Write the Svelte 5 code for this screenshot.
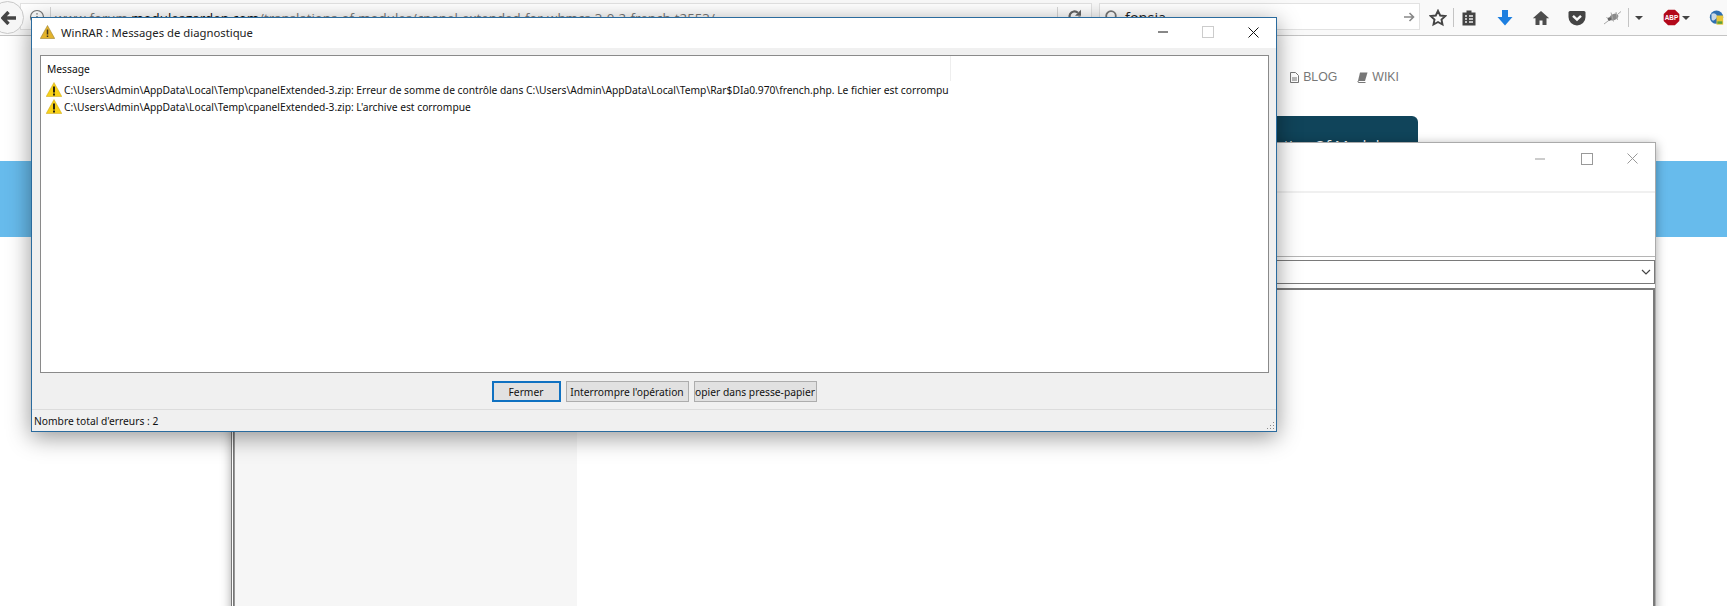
<script>
  const rows = [
    "C:\\Users\\Admin\\AppData\\Local\\Temp\\cpanelExtended-3.zip: Erreur de somme de contrôle dans C:\\Users\\Admin\\AppData\\Local\\Temp\\Rar$DIa0.970\\french.php. Le fichier est corrompu",
    "C:\\Users\\Admin\\AppData\\Local\\Temp\\cpanelExtended-3.zip: L'archive est corrompue"
  ];
</script>

<div class="page">
  <header class="toolbar">
    <div class="back">
      <svg width="15" height="14" viewBox="0 0 15 14"><path d="M7.500 1 1.800 7l5.700 6M2.500 7H15" fill="none" stroke="#444" stroke-width="3.400"/></svg>
    </div>
    <div class="urlbar">
      <svg class="info" width="16" height="16" viewBox="0 0 16 16"><circle cx="8" cy="8" r="6.500" fill="none" stroke="#777" stroke-width="1.200"/><path d="M8 7v4.500M8 4.200v1.400" stroke="#777" stroke-width="1.500"/></svg>
      <i class="urlsep"></i>
      <span class="url">www.forum.<b>modulesgarden.com</b>/translations-of-modules/cpanel-extended-for-whmcs-3-0-2-french-t2553/</span>
      <i class="urlsep end"></i>
      <svg class="reload" width="15" height="15" viewBox="0 0 15 15"><path d="M12.500 7.500a5 5 0 1 1-1.600-3.700" fill="none" stroke="#666" stroke-width="2.200"/><path d="M14 .8v6h-6Z" fill="#666"/></svg>
    </div>
    <div class="searchbar">
      <svg width="16" height="16" viewBox="0 0 16 16"><circle cx="8" cy="7" r="4.800" fill="none" stroke="#777" stroke-width="1.800"/><path d="m4.500 10.800-3 3.500" stroke="#777" stroke-width="2"/></svg>
      <span class="query">fonsia</span>
      <svg class="go" width="12" height="12" viewBox="0 0 12 12"><path d="M1 6h9M6.500 2l4 4-4 4" fill="none" stroke="#888" stroke-width="1.600"/></svg>
    </div>
    <div class="tools">
      <svg class="star" width="18" height="18" viewBox="0 0 18 18"><path d="m9 1.800 2.200 4.700 5 .6-3.700 3.400 1 5L9 13l-4.500 2.500 1-5L1.800 7.100l5-.6Z" fill="none" stroke="#444" stroke-width="1.900"/></svg>
      <i class="sep"></i>
      <svg width="16" height="18" viewBox="0 0 16 18"><path d="M1.500 3.500h4v-2h5v2h4v13h-13Z" fill="#444"/><path d="M4 7h2M8 7h4M4 10h2M8 10h4M4 13h2M8 13h4" stroke="#eee" stroke-width="1.300"/></svg>
      <svg class="m20" width="16" height="18" viewBox="0 0 16 18"><path d="M5 1h6v7h4.500L8 16.500.5 8H5Z" fill="#1d7fe0"/></svg>
      <svg class="m19" width="18" height="16" viewBox="0 0 18 16"><path d="M9 1 .8 8.300h2.700V15h4v-4.500h3V15h4V8.300h2.700Z" fill="#4d4d4d"/></svg>
      <svg class="m18" width="18" height="16" viewBox="0 0 18 16"><path d="M2 1h14q1.500 0 1.500 1.500V7A8.500 8.500 0 0 1 .5 7V2.500Q.5 1 2 1Z" fill="#444"/><path d="m5 5.800 4 3.800 4-3.800" fill="none" stroke="#f9f9f9" stroke-width="2.400"/></svg>
      <svg class="m17" width="20" height="16" viewBox="0 0 20 16"><ellipse cx="11" cy="7" rx="4.500" ry="3" fill="#8a8a8a" transform="rotate(-25 11 7)"/><path d="M1 14 7 9.500M3.500 7l3 3.500M8 2.500l2.500 9M13 2l1.500 8M15 4l3-2.500" stroke="#a8a8a8" stroke-width="1"/><circle cx="6.500" cy="9" r="1.800" fill="#666"/></svg>
      <i class="sep second"></i>
      <i class="caret one"></i>
      <svg class="abp" width="17" height="17" viewBox="0 0 20 20"><path d="M6 .8h8L19.200 6v8L14 19.200H6L.8 14V6Z" fill="#b3081a"/><text x="10" y="13.400" text-anchor="middle" class="abptext">ABP</text></svg>
      <i class="caret two"></i>
      <svg class="globe" width="15" height="18" viewBox="0 0 18 20"><circle cx="9" cy="9" r="8" fill="#2f6fb0"/><path d="M3 5q4-2 6 1t-2 6-4-2Z" fill="#c9d8e6"/><path d="M9 7h8v11H9Z" fill="#e9c53a"/><path d="M10 14h6v3h-6Z" fill="#5ba13c"/></svg>
    </div>
  </header>

  <nav class="sitenav">
    <span class="link">
      <svg width="9" height="11" viewBox="0 0 9 11"><path d="M.5.500h5l3 3v7h-8Z" fill="none" stroke="#777"/><path d="M2 6h5M2 8h5" stroke="#777"/></svg>
      BLOG
    </span>
    <span class="link">
      <svg width="11" height="11" viewBox="0 0 11 11"><path d="M3 .5h7.500L8 9H1Z" fill="#777"/><path d="M1 9q-.5 1.500 1 1.500h6.500" fill="none" stroke="#777"/></svg>
      WIKI
    </span>
  </nav>
  <div class="tabrow"><div class="tab">Listing Of Modules</div></div>
  <div class="band"></div>

  <section class="win back-win">
    <div class="win-head">
      <svg width="10" height="2" viewBox="0 0 10 2"><path d="M0 1h10" stroke="#999" stroke-width="1"/></svg>
      <span class="sq"></span>
      <svg width="11" height="11" viewBox="0 0 11 11"><path d="m.5.500 10 10M10.500.5l-10 10" stroke="#999"/></svg>
    </div>
    <div class="win-space"></div>
    <div class="combo">
      <svg width="10" height="6" viewBox="0 0 10 6"><path d="m1 1 4 4 4-4" fill="none" stroke="#444" stroke-width="1.200"/></svg>
    </div>
    <div class="content"><aside class="side"></aside></div>
  </section>

  <section class="win dialog">
    <div class="d-title">
      <svg width="15" height="14" viewBox="0 0 15 14"><path d="M7.500.5 14.700 13.500H.3Z" fill="#e3b32c" stroke="#9c8232" stroke-width=".6"/><path d="M7.500 4.500v5M7.500 10.500v1.500" stroke="#3a3320" stroke-width="1.500"/></svg>
      <span>WinRAR : Messages de diagnostique</span>
      <div class="d-controls">
        <svg width="10" height="2" viewBox="0 0 10 2"><path d="M0 1h10" stroke="#111"/></svg>
        <span class="sq off"></span>
        <svg width="11" height="11" viewBox="0 0 11 11"><path d="m.5.500 10 10M10.500.5l-10 10" stroke="#111"/></svg>
      </div>
    </div>
    <div class="d-body">
      <div class="list">
        <div class="col-head"><span>Message</span></div>
        {#each rows as row}
          <div class="row">
            <svg width="16" height="15" viewBox="0 0 16 15"><path d="M8 .5 15.800 14.500H.2Z" fill="#f8d117" stroke="#c9a516" stroke-width=".5"/><path d="M8 4.500v6M8 11.500v2" stroke="#111" stroke-width="1.800"/></svg>
            <span class="rowtext">{row}</span>
          </div>
        {/each}
      </div>
      <div class="buttons">
        <button class="btn primary">Fermer</button>
        <button class="btn w2">Interrompre l'opération</button>
        <button class="btn w2"><span class="clip">opier dans presse-papier</span></button>
      </div>
      <div class="status">
        <span>Nombre total d'erreurs : 2</span>
        <svg width="10" height="10" viewBox="0 0 10 10"><path d="M8 1h1v1H8zM8 4h1v1H8zM5 4h1v1H5zM8 7h1v1H8zM5 7h1v1H5zM2 7h1v1H2z" fill="#8a8a8a"/></svg>
      </div>
    </div>
  </section>
</div>

<style>
  :global(body) { margin: 0; background: #fff; }
  .page {
    position: relative; width: 1727px; height: 606px; overflow: hidden; background: #fff;
    font-family: "Noto Sans", "Open Sans", sans-serif; color: #111;
  }
  .toolbar {
    height: 36px; box-sizing: border-box; display: flex; align-items: flex-start;
    background: #f9f9f9; border-bottom: 1px solid #c4c4c4; position: relative;
  }
  .back {
    position: absolute; left: -9px; top: 1px; width: 33px; height: 33px; border-radius: 50%; z-index: 1;
    border: 1px solid #c8c8c8; background: #f6f6f6; display: flex; align-items: center; justify-content: flex-start; padding-left: 9px; box-sizing: border-box;
  }
  .urlbar {
    margin: 3px 0 0 20px; width: 1072px; height: 27px; flex: none; box-sizing: border-box; background: #fff;
    border: 1px solid #e2e2e2; display: flex; align-items: center; padding-left: 8px;
  }
  .info { flex: none; }
  .urlsep { width: 1px; height: 19px; background: #d8d8d8; flex: none; margin: 0 4px 0 5px; }
  .urlsep.end { margin: 0 9px 0 auto; }
  .reload { flex: none; margin-right: 9px; }
  .url {
    font: 13.300px "Open Sans", sans-serif; color: #777; white-space: nowrap;
    position: relative; top: 1px;
  }
  .url b { font-weight: 400; color: #111; }
  .searchbar {
    margin: 3px 0 0 7px; width: 321px; height: 27px; flex: none; box-sizing: border-box; background: #fff;
    border: 1px solid #e2e2e2; display: flex; align-items: center; padding-left: 3px;
  }
  .query { font: 14.500px "Open Sans", sans-serif; color: #222; margin-left: 6px; position: relative; top: 1px; }
  .go { margin-left: auto; margin-right: 4px; }
  .tools { flex: 1; height: 35px; display: flex; align-items: center; padding-left: 9px; }
  .tools svg { flex: none; }
  .sep { width: 1px; height: 19px; background: #c4c4c4; margin: 0 7px 0 6px; flex: none; }
  .m20 { margin-left: 20px; }
  .m19 { margin-left: 19px; }
  .m18 { margin-left: 18px; }
  .m17 { margin-left: 17px; }
  .sep.second { margin: 0 6px 0 5px; }
  .caret { width: 0; height: 0; border: 4px solid transparent; border-top: 4px solid #444; border-bottom: 0; flex: none; }
  .caret.one { margin-right: 20px; }
  .caret.two { margin: 0 0 0 2px; }
  .globe { margin-left: 19px; }
  .abptext { font: 700 7.500px "Liberation Sans", sans-serif; fill: #fff; }

  .sitenav {
    display: flex; justify-content: flex-end; gap: 20px; padding: 33px 328px 0 0; height: 17px;
    font: 12.300px/17px "Liberation Sans", sans-serif; color: #777;
  }
  .link { display: inline-flex; align-items: center; gap: 4px; }
  .tabrow { display: flex; justify-content: flex-end; padding: 30px 309px 0 0; height: 45px; }
  .tab {
    width: 400px; height: 45px; box-sizing: border-box; background: #10445a; border-radius: 6px 6px 0 0;
    color: #fff; font: 15px "Open Sans", sans-serif; text-align: right; padding: 19px 23px 0 0;
  }
  .band { height: 76px; background: #67bbec; }

  .win { position: absolute; box-sizing: border-box; }
  .back-win {
    left: 231px; top: 142px; width: 1425px; height: 480px; background: #fff;
    border: 1px solid #aaa; border-left: 3px double #777; box-shadow: 0 2px 10px rgba(0,0,0,.35);
    display: flex; flex-direction: column;
  }
  .win-head {
    height: 50px; flex: none; box-sizing: border-box; border-bottom: 2px solid #f0f0f0;
    display: flex; justify-content: flex-end; align-items: flex-start; padding: 10px 17px 0 0; gap: 34px;
  }
  .win-head svg:first-child { margin-top: 5px; margin-right: 2px; }
  .sq { width: 10px; height: 10px; border: 1px solid #999; display: block; }
  .win-space { height: 63px; flex: none; border-bottom: 1px solid #b5b5b5; }
  .combo {
    margin-top: 3px; height: 24px; flex: none; box-sizing: border-box; border: 1px solid #7a7a7a;
    display: flex; justify-content: flex-end; align-items: center; padding-right: 3px;
  }
  .content {
    margin: 4px 0 0 0; flex: 1; border: 2px solid #7a7a7a; border-left: 1px solid #999; display: flex;
  }
  .side { width: 342px; background: #f6f6f6; }

  .dialog {
    left: 31px; top: 17px; width: 1246px; height: 415px; background: #f0f0f0;
    border: 1px solid #2a6b9e; box-shadow: 0 5px 22px rgba(0,0,0,.42);
    display: flex; flex-direction: column;
  }
  .d-title {
    height: 30px; box-sizing: border-box; padding-bottom: 2px; flex: none; background: #fff; display: flex; align-items: center; padding-left: 8px;
    font-size: 11.300px; color: #222; gap: 6px;
  }
  .d-controls { margin-left: auto; display: flex; align-items: center; gap: 34px; padding-right: 17px; }
  .sq.off { border-color: #ccc; }
  .d-body { flex: 1; display: flex; flex-direction: column; padding-top: 7px; min-height: 0; }
  .list {
    margin: 0 7px 0 8px; height: 318px; flex: none; box-sizing: border-box; background: #fff; border: 1px solid #8a8a8a;
    font-size: 10.250px; color: #111; overflow: hidden;
  }
  .col-head { height: 25px; box-sizing: border-box; padding: 5px 0 0 6px; line-height: 16px; width: 910px; border-right: 1px solid #eee; }
  .row { display: flex; align-items: center; height: 17px; padding-left: 5px; width: 905px; overflow: hidden; white-space: nowrap; }
  .row svg { flex: none; margin-right: 2px; }
  .buttons { display: flex; justify-content: center; gap: 5px; padding: 8px 0 7px; height: 21px; border-bottom: 1px solid #dcdcdc; flex: none; }
  .btn {
    height: 21px; box-sizing: border-box; border: 1px solid #adadad; background: #e1e1e1; padding: 0;
    font: 10.250px "Noto Sans", sans-serif; color: #111; width: 123px; overflow: hidden; white-space: nowrap;
  }
  .btn.primary { width: 69px; border: 2px solid #0f71c1; }
  .clip { display: block; text-align: center; }
  .status {
    flex: 1; display: flex; align-items: center; justify-content: space-between; padding: 0 1px 0 2px;
    font-size: 10.250px; color: #111;
  }
  .status svg { align-self: flex-end; }
</style>
